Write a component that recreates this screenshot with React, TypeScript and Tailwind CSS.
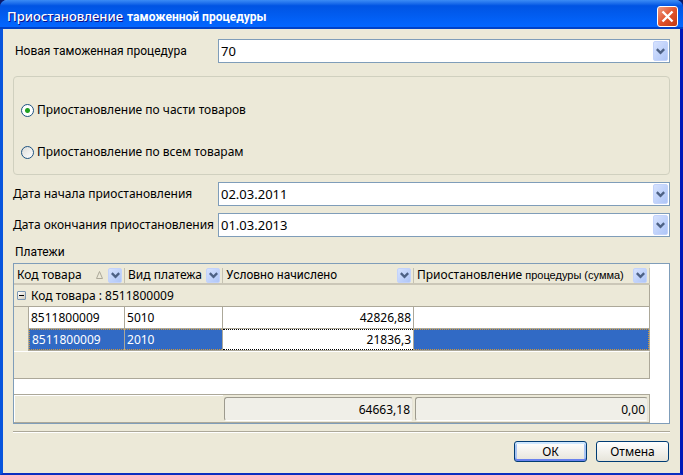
import type { ReactNode } from 'react';

function Chevron() {
  return (
    <svg width="9" height="7" viewBox="0 0 9 7" className="shrink-0" fill="none" stroke="#4d6185" strokeWidth="2.4" aria-hidden="true">
      <path d="M.8 1.2L4.5 4.9L8.2 1.2" />
    </svg>
  );
}

const arrowFace =
  'flex items-center justify-center rounded-[2px] border border-[#c3d3fb] bg-linear-to-br from-[#d6e2fe] to-[#aec5f7]';

function Combo({ id, value }: { id: string; value: string }) {
  return (
    <div className="relative h-6 flex-1 border border-[#7f9db9] bg-white">
      <select id={id} className="block h-full w-full appearance-none bg-transparent pr-5 pb-px pl-[2px] text-[13px] leading-5 outline-none">
        <option>{value}</option>
      </select>
      <span className={`${arrowFace} pointer-events-none absolute inset-y-px right-px w-[15px]`}>
        <Chevron />
      </span>
    </div>
  );
}

function HeadCell({ children, label, span, sorted }: { children: ReactNode; label: string; span?: number; sorted?: boolean }) {
  return (
    <th colSpan={span} scope="col" className="h-[21px] p-0 font-normal">
      <div className="flex h-[21px] items-center border-b-2 border-[#cbc7b8] px-[3px] pt-[3px] whitespace-nowrap">
        <span className="flex-1 text-left">{children}</span>
        {sorted && (
          <svg width="7" height="8" viewBox="0 0 7 8" className="mr-[5px]" fill="none" stroke="#aca899" aria-hidden="true">
            <path d="M3.5 .5L.5 7.5h6z" />
          </svg>
        )}
        <button type="button" aria-label={label} className={`${arrowFace} h-[15px] w-[14px] shrink-0`}>
          <Chevron />
        </button>
        <span className="-mr-[3px] ml-[2px] h-[15px] w-px bg-[#c5c2b2]" />
      </div>
    </th>
  );
}

const cell = 'h-[22px] border-r border-b border-[#aca899] px-[2px] py-0';
const pickedCell = 'h-[22px] border-r border-b border-[#aca899] p-0';
const picked = 'h-[21px] border-y border-dotted px-[2px] leading-[19px]';
const sum = 'h-6 rounded-[3px] border border-t-[#9d9a8e] border-r-[#e6e3d8] border-b-white border-l-[#9d9a8e] bg-[#f0efe8] pr-[2px] text-right leading-[24px]';

export default function App() {
  return (
    <div className="bg-[#0a1a6a]">
      <main className="flex min-h-screen flex-col rounded-t-[7px] border-x-[3px] border-b-2 border-l-[#0855dd] border-r-[#0019b8] border-b-[#0b2fc0] bg-[#ece9d8] font-['Noto_Sans',sans-serif] text-[12px] leading-4 text-black">
        <header className="-mx-[3px] flex h-[29px] items-center justify-between rounded-t-[7px] bg-linear-to-b from-[#3b8cf5] from-0% via-[#0054e3] via-20% to-[#0366ff] to-90% pt-[3px] pr-[5px] pl-[7px] shadow-[inset_0_-2px_0_#0042c8]">
          <h1 className="flex items-baseline gap-1 font-bold whitespace-nowrap text-white">
            <span className="text-[13px] font-medium [text-shadow:1px_1px_0_#0f1089]">Приостановление</span>
            <span className="font-[Roboto,sans-serif]">таможенной процедуры</span>
          </h1>
          <button type="button" aria-label="Закрыть" className="flex size-[21px] items-center justify-center rounded-[3px] border border-white bg-linear-to-br from-[#ee9a80] via-[#e0532c] to-[#c23a10]">
            <svg width="13" height="13" viewBox="0 0 13 13" stroke="#fff" strokeWidth="2.4" aria-hidden="true">
              <path d="M1.5 1.5l10 10M11.5 1.5l-10 10" />
            </svg>
          </button>
        </header>

        <form className="flex flex-1 flex-col px-[10px] pt-[10px]" onSubmit={(e) => e.preventDefault()}>
          <div className="flex items-center">
            <label htmlFor="procedure" className="w-[205px] shrink-0 pl-[2px] font-[Roboto,sans-serif]">Новая таможенная процедура</label>
            <Combo id="procedure" value="70" />
          </div>

          <fieldset className="mt-[13px] flex flex-col gap-[26px] rounded-[4px] border border-[#d0d0bf] px-[7px] pt-[25px] pb-[14px]">
            {['Приостановление по части товаров', 'Приостановление по всем товарам'].map((text, i) => (
              <label key={text} className="flex items-center gap-[3px] whitespace-nowrap">
                <input
                  type="radio"
                  name="scope"
                  defaultChecked={i === 0}
                  className="size-[13px] appearance-none rounded-full border border-[#1d5281] bg-linear-to-br from-[#dcdcd7] to-white checked:bg-[radial-gradient(circle,#21a121_0_2px,#fff_3px)]"
                />
                {text}
              </label>
            ))}
          </fieldset>

          <div className="mt-[7px] flex items-center">
            <label htmlFor="start" className="w-[205px] shrink-0 whitespace-nowrap">Дата начала приостановления</label>
            <Combo id="start" value="02.03.2011" />
          </div>
          <div className="mt-[7px] flex items-center">
            <label htmlFor="end" className="w-[205px] shrink-0 whitespace-nowrap">Дата окончания приостановления</label>
            <Combo id="end" value="01.03.2013" />
          </div>

          <h2 className="mt-[7px] pl-[2px] font-[Roboto,sans-serif]">Платежи</h2>
          <section className="mt-[3px] border border-[#7f9db9] bg-white pr-[19px]">
            <table className="w-full table-fixed border-separate border-spacing-0 text-left">
              <colgroup>
                <col className="w-[15px]" />
                <col className="w-[96px]" />
                <col className="w-[98px]" />
                <col className="w-[191px]" />
                <col />
              </colgroup>
              <thead className="bg-[#ece9d8]">
                <tr>
                  <HeadCell span={2} sorted label="Фильтр: код товара">Код товара</HeadCell>
                  <HeadCell label="Фильтр: вид платежа">Вид платежа</HeadCell>
                  <HeadCell label="Фильтр: начислено"><span className="font-[Roboto,sans-serif]">Условно начислено</span></HeadCell>
                  <HeadCell label="Фильтр: сумма">
                    <span className="flex items-baseline gap-[3px]">
                      Приостановление <span className="font-['Liberation_Sans',sans-serif] text-[11px]">процедуры (сумма)</span>
                    </span>
                  </HeadCell>
                </tr>
              </thead>
              <tbody>
                <tr className="bg-[#ece9d8]">
                  <td colSpan={5} className="h-[22px] border-r border-b border-[#aca899] p-0">
                    <div className="flex items-center gap-[5px] pl-[3px]">
                      <button type="button" aria-label="Свернуть" className="flex size-[9px] items-center justify-center rounded-[1px] border border-[#7b98b5] bg-linear-to-br from-white to-[#cfc9ba]">
                        <span className="h-px w-[5px] bg-black" />
                      </button>
                      Код товара : 8511800009
                    </div>
                  </td>
                </tr>
                <tr className="bg-white">
                  <td className="border-r border-[#aca899] bg-[#ece9d8] p-0" />
                  <td className={cell}>8511800009</td>
                  <td className={cell}>5010</td>
                  <td className={`${cell} text-right`}>42826,88</td>
                  <td className={cell} />
                </tr>
                <tr className="bg-[#316ac5] text-white">
                  <td className="border-r border-[#aca899] bg-[#ece9d8] p-0" />
                  <td className={pickedCell}><div className={`${picked} border-l border-[#ce953a]`}>8511800009</div></td>
                  <td className={pickedCell}><div className={`${picked} border-[#ce953a]`}>2010</div></td>
                  <td className={`${pickedCell} bg-white text-right text-black`}><div className={`${picked} border-black`}>21836,3</div></td>
                  <td className={pickedCell}><div className={`${picked} border-r border-[#ce953a]`} /></td>
                </tr>
                <tr className="bg-[#ece9d8]">
                  <td colSpan={5} className="h-7 border-y border-r border-t-white border-r-[#aca899] border-b-[#aca899] p-0" />
                </tr>
              </tbody>
              <tfoot>
                <tr>
                  <td colSpan={5} className="h-[15px] p-0" />
                </tr>
                <tr className="bg-[#ece9d8]">
                  <td colSpan={3} className="h-[29px] border-y border-[#aca899] p-0 shadow-[inset_1px_1px_0_#fff]" />
                  <td className="border-y border-[#aca899] px-px py-0"><div className={sum}>64663,18</div></td>
                  <td className="border-y border-r border-[#aca899] px-px py-0"><div className={sum}>0,00</div></td>
                </tr>
              </tfoot>
            </table>
          </section>

          <hr className="mt-[7px] h-[2px] border-t border-b border-t-[#aca899] border-b-white" />
          <div className="mt-2 flex justify-end gap-[9px] pr-px pb-[11px]">
            <button type="submit" className="h-[21px] w-[73px] rounded-[3px] border border-[#003c74] bg-linear-to-b from-white to-[#e6e4da] shadow-[inset_0_-2px_0_#6982ee,inset_0_2px_0_#cee7ff,inset_2px_0_0_#a8c4f3,inset_-2px_0_0_#a8c4f3]">ОК</button>
            <button type="button" className="h-[21px] w-[73px] rounded-[3px] border border-[#003c74] bg-linear-to-b from-white to-[#e6e4da]">Отмена</button>
          </div>
        </form>
      </main>
    </div>
  );
}
